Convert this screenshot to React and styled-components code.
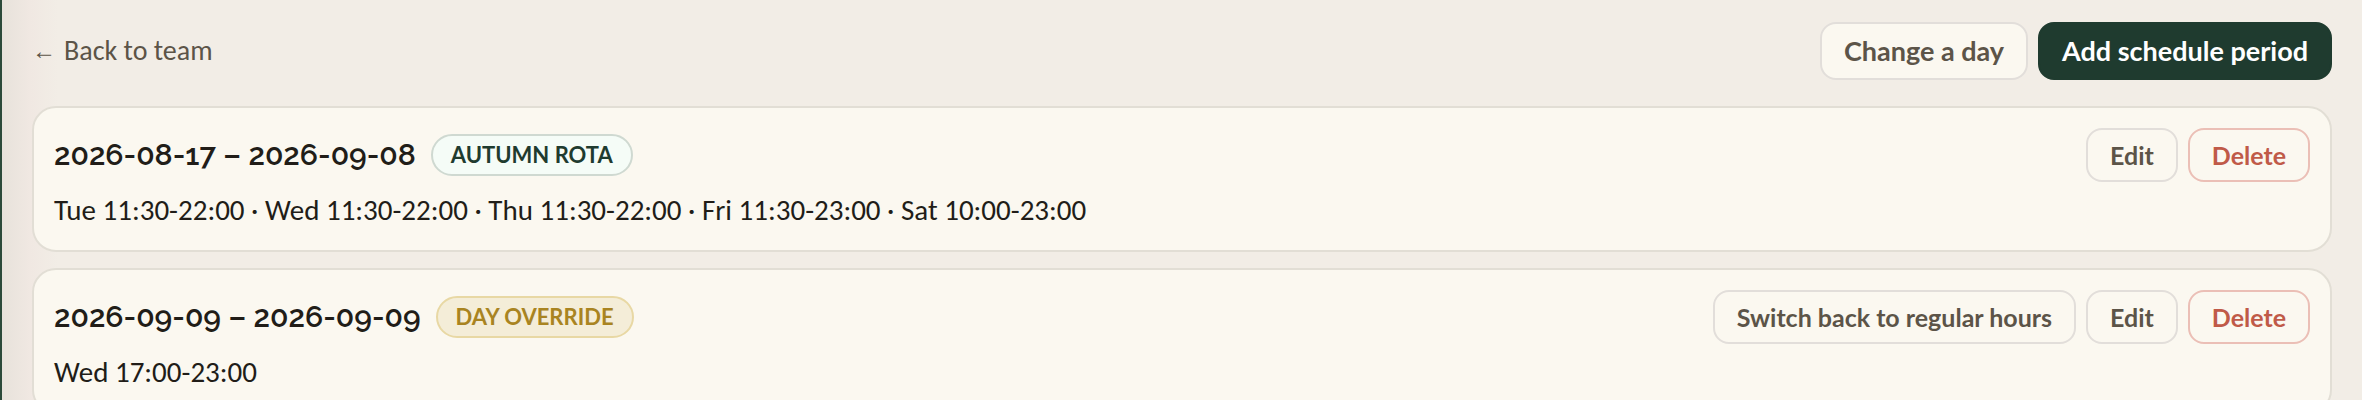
import React from "react";
import styled, { createGlobalStyle } from "styled-components";

const periods = [
  {
    id: 1,
    dates: "2026-08-17 – 2026-09-08",
    label: "Autumn rota",
    tone: "green",
    hours:
      "Tue 11:30-22:00 · Wed 11:30-22:00 · Thu 11:30-22:00 · Fri 11:30-23:00 · Sat 10:00-23:00",
  },
  {
    id: 2,
    dates: "2026-09-09 – 2026-09-09",
    label: "Day override",
    tone: "gold",
    hours: "Wed 17:00-23:00",
    override: true,
  },
];

const App = () => {
  return (
    <>
      <GlobalStyle />
      <Page>
        <Toolbar>
          <BackLink href="#team">
            <Arrow>←</Arrow> Back to team
          </BackLink>
          <Actions>
            <Button type="button" $size="large">
              Change a day
            </Button>
            <Button type="button" $size="large" $variant="primary">
              Add schedule period
            </Button>
          </Actions>
        </Toolbar>
        <PeriodList>
          {periods.map((period) => (
            <PeriodCard key={period.id}>
              <CardHeader>
                <Title>
                  <Dates>{period.dates}</Dates>
                  <Badge $tone={period.tone}>{period.label}</Badge>
                </Title>
                <Actions>
                  {period.override && (
                    <Button type="button">Switch back to regular hours</Button>
                  )}
                  <Button type="button">Edit</Button>
                  <Button type="button" $variant="danger">
                    Delete
                  </Button>
                </Actions>
              </CardHeader>
              <Hours>{period.hours}</Hours>
            </PeriodCard>
          ))}
        </PeriodList>
      </Page>
    </>
  );
};

const GlobalStyle = createGlobalStyle`
  * {
    box-sizing: border-box;
  }
  body {
    margin: 0;
    overflow: hidden;
    background: #f2ede6;
    color: #211d18;
    font-family: Carlito, Lato, "Liberation Sans", sans-serif;
    font-size: 28px;
    line-height: 40px;
  }
`;

const Page = styled.main`
  min-height: 100vh;
  padding: 22px 30px 16px;
  border-left: 2px solid #2b4a3a;
  background: linear-gradient(to right, #e7e2db, #f0e8e2 28px, #f2ede6 56px);
`;

const Toolbar = styled.header`
  display: flex;
  align-items: center;
  justify-content: space-between;
  gap: 24px;
  margin-bottom: 26px;
`;

const BackLink = styled.a`
  display: flex;
  align-items: center;
  gap: 8px;
  color: #5c5448;
  text-decoration: none;
  &:hover {
    text-decoration: underline;
  }
`;

const Arrow = styled.span`
  font-family: "Liberation Serif", serif;
  font-size: 24px;
`;

const Actions = styled.div`
  display: flex;
  flex-wrap: wrap;
  gap: 10px;
`;

const variants = {
  plain: { color: "#5c5448", border: "#e2deda", background: "#fbf8f0" },
  primary: { color: "#ffffff", border: "#1f3b2f", background: "#1f3b2f" },
  danger: { color: "#c05a48", border: "#ebbfb6", background: "#fbf8f0" },
};

const Button = styled.button`
  height: ${({ $size }) => ($size === "large" ? "58px" : "54px")};
  padding: 0 22px;
  border: 2px solid ${({ $variant = "plain" }) => variants[$variant].border};
  border-radius: 16px;
  background: ${({ $variant = "plain" }) => variants[$variant].background};
  color: ${({ $variant = "plain" }) => variants[$variant].color};
  font-family: Lato, "Liberation Sans", sans-serif;
  font-size: ${({ $size }) => ($size === "large" ? "27px" : "25px")};
  font-weight: 700;
  line-height: 40px;
  cursor: pointer;
`;

const PeriodList = styled.section`
  display: grid;
  gap: 16px;
`;

const PeriodCard = styled.article`
  padding: 20px;
  border: 2px solid #e2ded5;
  border-radius: 24px;
  background: #fbf8f0;
`;

const CardHeader = styled.div`
  display: flex;
  align-items: center;
  justify-content: space-between;
  gap: 20px;
  margin-bottom: 8px;
`;

const Title = styled.div`
  display: flex;
  align-items: center;
  gap: 15px;
`;

const Dates = styled.h2`
  margin: 0;
  font-family: Raleway, Lato, "Liberation Sans", sans-serif;
  font-size: 30px;
  font-weight: 600;
`;

const tones = {
  green: { color: "#1f3b2f", border: "#cfd9d1", background: "#f5fcf7" },
  gold: { color: "#a98421", border: "#e8d8a4", background: "#f4edd8" },
};

const Badge = styled.span`
  padding: 3px 18px;
  border: 2px solid ${({ $tone }) => tones[$tone].border};
  border-radius: 999px;
  background: ${({ $tone }) => tones[$tone].background};
  color: ${({ $tone }) => tones[$tone].color};
  font-family: Lato, "Liberation Sans", sans-serif;
  font-size: 22px;
  font-weight: 700;
  line-height: 32px;
  text-transform: uppercase;
`;

const Hours = styled.p`
  margin: 0;
  font-size: 29px;
`;

export default App;
